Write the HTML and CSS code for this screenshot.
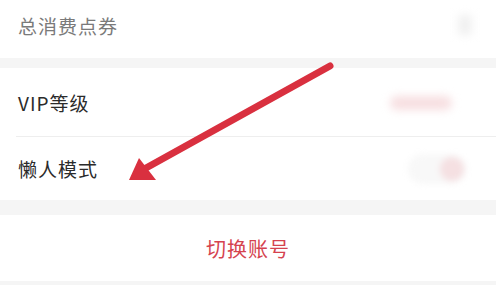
FILE: index.html
```html
<!DOCTYPE html>
<html lang="zh-CN">
<head>
    <meta charset="UTF-8">
    <meta name="viewport" content="width=device-width, initial-scale=1.0">
    <title>设置</title>
    <link rel="stylesheet" href="styles.css">
</head>
<body>
    <div class="page">
        <div class="row row-top">
            <span class="label faded">总消费点券</span>
            <span class="chevron"></span>
        </div>

        <div class="card">
            <div class="row row-vip">
                <span class="label">VIP等级</span>
                <span class="vip-badge"></span>
            </div>
            <div class="row row-lazy">
                <span class="label">懒人模式</span>
                <span class="switch"><span class="knob"></span></span>
            </div>
        </div>

        <div class="row row-switch">
            <span class="switch-account">切换账号</span>
        </div>

        <svg class="arrow" width="496" height="285" viewBox="0 0 496 285">
            <line x1="330" y1="66" x2="146" y2="168" stroke="#d9303f" stroke-width="7" stroke-linecap="round"/>
            <polygon points="129,180 139,158 156,180" fill="#d9303f"/>
        </svg>
    </div>
</body>
</html>
```

FILE: styles.css
```css
/* Pagina de ajustes */
body {
    margin: 0;
    background-color: #f5f5f5;
    font-family: "Noto Sans CJK SC", "Noto Sans", sans-serif;
}

.page {
    position: relative;
    width: 496px;
    height: 285px;
    overflow: hidden;
}

.row {
    display: flex;
    align-items: center;
    justify-content: space-between;
    background-color: #fff;
    padding: 0 30px 0 18px;
}

.row-top {
    height: 50px;
    padding-bottom: 8px;
    margin-bottom: 10px;
}

.card {
    background-color: #fff;
    margin-bottom: 15px;
}

.row-vip {
    height: 69px;
    position: relative;
}

    .row-vip::after {
        content: "";
        position: absolute;
        left: 16px;
        right: 0;
        bottom: 0;
        border-bottom: 1px solid #eeeeee;
    }

.row-lazy {
    height: 63px;
}

.label {
    font-size: 19px;
    color: #2b2b2b;
    letter-spacing: 1px;
}

.faded {
    color: #7a7a7a;
}

.chevron {
    width: 14px;
    height: 20px;
    margin-right: -6px;
    background-color: #f1f1f1;
    filter: blur(4px);
}

.vip-badge {
    width: 62px;
    height: 14px;
    margin-right: 14px;
    border-radius: 7px;
    background-color: #f7dfe1;
    filter: blur(4px);
}

.switch {
    position: relative;
    width: 58px;
    height: 30px;
    border-radius: 15px;
    background-color: #f8f8f8;
    filter: blur(3px);
}

    .switch .knob {
        position: absolute;
        right: 2px;
        top: 3px;
        width: 24px;
        height: 24px;
        border-radius: 50%;
        background-color: #f5e0e2;
    }

.row-switch {
    height: 66px;
    justify-content: center;
    padding: 0;
}

.switch-account {
    font-size: 20px;
    color: #d5434f;
    letter-spacing: 1px;
}

.arrow {
    position: absolute;
    left: 0;
    top: 0;
}
```
